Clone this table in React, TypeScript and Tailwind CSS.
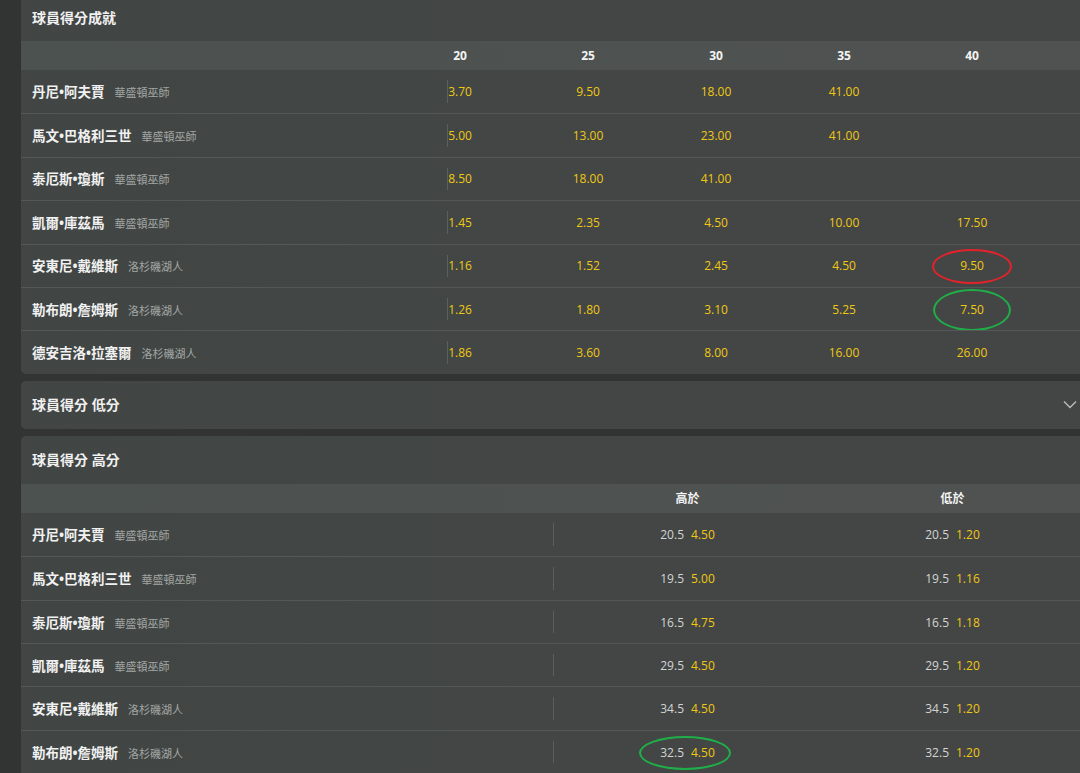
import React from "react";

const font = { fontFamily: '"Open Sans","Noto Sans CJK TC",sans-serif' };

type Mark = { color: "red" | "green"; w: number; h: number; dx?: number };

const p1: { name: string; team: string; v: string[]; marks?: Record<number, Mark> }[] = [
  { name: "丹尼•阿夫賈", team: "華盛頓巫師", v: ["3.70", "9.50", "18.00", "41.00", ""] },
  { name: "馬文•巴格利三世", team: "華盛頓巫師", v: ["5.00", "13.00", "23.00", "41.00", ""] },
  { name: "泰厄斯•瓊斯", team: "華盛頓巫師", v: ["8.50", "18.00", "41.00", "", ""] },
  { name: "凱爾•庫茲馬", team: "華盛頓巫師", v: ["1.45", "2.35", "4.50", "10.00", "17.50"] },
  { name: "安東尼•戴維斯", team: "洛杉磯湖人", v: ["1.16", "1.52", "2.45", "4.50", "9.50"], marks: { 4: { color: "red", w: 80, h: 35 } } },
  { name: "勒布朗•詹姆斯", team: "洛杉磯湖人", v: ["1.26", "1.80", "3.10", "5.25", "7.50"], marks: { 4: { color: "green", w: 78, h: 42 } } },
  { name: "德安吉洛•拉塞爾", team: "洛杉磯湖人", v: ["1.86", "3.60", "8.00", "16.00", "26.00"] },
];

const p3: { name: string; team: string; o: [string, string]; u: [string, string]; mark?: Mark }[] = [
  { name: "丹尼•阿夫賈", team: "華盛頓巫師", o: ["20.5", "4.50"], u: ["20.5", "1.20"] },
  { name: "馬文•巴格利三世", team: "華盛頓巫師", o: ["19.5", "5.00"], u: ["19.5", "1.16"] },
  { name: "泰厄斯•瓊斯", team: "華盛頓巫師", o: ["16.5", "4.75"], u: ["16.5", "1.18"] },
  { name: "凱爾•庫茲馬", team: "華盛頓巫師", o: ["29.5", "4.50"], u: ["29.5", "1.20"] },
  { name: "安東尼•戴維斯", team: "洛杉磯湖人", o: ["34.5", "4.50"], u: ["34.5", "1.20"] },
  { name: "勒布朗•詹姆斯", team: "洛杉磯湖人", o: ["32.5", "4.50"], u: ["32.5", "1.20"], mark: { color: "green", w: 92, h: 34, dx: -3 } },
];

function Ellipse({ m }: { m: Mark }) {
  return (
    <div
      className={
        "pointer-events-none absolute left-1/2 top-1/2 rounded-[50%] border-[2.5px] " +
        (m.color === "red" ? "border-[#e3232b]" : "border-[#1fae48]")
      }
      style={{ width: m.w, height: m.h, marginLeft: -m.w / 2 + (m.dx ?? 0), marginTop: -m.h / 2 }}
    />
  );
}

function Name({ name, team }: { name: string; team: string }) {
  return (
    <div className="flex items-baseline pl-[11px]">
      <span className="text-[13.5px] font-bold text-[#f1f1f1]">{name}</span>
      <span className="ml-[10px] text-[11px] text-[#a3a7a5]">{team}</span>
    </div>
  );
}

function Title({ children, chevron }: { children: React.ReactNode; chevron?: boolean }) {
  return (
    <div className="flex h-[48px] items-center justify-between pl-[11px] pr-[10px]">
      <span className="text-[14px] font-bold text-[#f1f1f1]">{children}</span>
      {chevron && (
        <svg width="14" height="9" viewBox="0 0 14 9" className="mr-[1px]">
          <path d="M1 1.5 L7 7.5 L13 1.5" fill="none" stroke="#b8bcba" strokeWidth="1.4" />
        </svg>
      )}
    </div>
  );
}

export default function App() {
  return (
    <div className="h-[773px] w-[1080px] overflow-hidden bg-[#323433]" style={font}>
      <div className="ml-[21px] mt-[-7px] flex w-[1067px] flex-col">
        {/* Panel 1 */}
        <div className="overflow-hidden rounded-[5px] bg-gradient-to-r from-[#414644] to-[#444645]">
          <Title>球員得分成就</Title>
          <div className="flex h-[29px] items-center bg-gradient-to-r from-[#4c5250] to-[#4f5250] pt-px">
            <div className="w-[375px]" />
            {["20", "25", "30", "35", "40"].map((h) => (
              <div key={h} className="w-[128px] text-center text-[12px] font-bold text-[#f4f4f4]">
                {h}
              </div>
            ))}
          </div>
          {p1.map((r, i) => (
            <div
              key={r.name}
              className={"relative flex h-[43.4px] items-center pt-px " + (i > 0 ? "border-t border-[#535755]" : "")}
            >
              <div className="w-[375px]">
                <Name name={r.name} team={r.team} />
              </div>
              <div className="absolute left-[426px] top-[10px] bottom-[10px] w-px bg-[#5b5f5d]" />
              {r.v.map((v, j) => (
                <div key={j} className="relative flex h-full w-[128px] items-center justify-center text-[12px] text-[#f0c814]">
                  {v}
                  {r.marks && r.marks[j] && <Ellipse m={r.marks[j]} />}
                </div>
              ))}
            </div>
          ))}
        </div>

        {/* Panel 2 */}
        <div className="mt-[7px] rounded-[5px] bg-gradient-to-r from-[#414644] to-[#444645]">
          <Title chevron>球員得分 低分</Title>
        </div>

        {/* Panel 3 */}
        <div className="mt-[7px] rounded-t-[5px] bg-gradient-to-r from-[#414644] to-[#444645]">
          <Title>球員得分 高分</Title>
          <div className="flex h-[29px] items-center bg-gradient-to-r from-[#4c5250] to-[#4f5250] pt-[2px]">
            <div className="w-[534px]" />
            {["高於", "低於"].map((h) => (
              <div key={h} className="w-[265px] text-center text-[12px] font-bold text-[#f4f4f4]">
                {h}
              </div>
            ))}
          </div>
          {p3.map((r, i) => (
            <div
              key={r.name}
              className={"relative flex h-[43.4px] items-center pt-[2px] " + (i > 0 ? "border-t border-[#535755]" : "")}
            >
              <div className="w-[534px]">
                <Name name={r.name} team={r.team} />
              </div>
              <div className="absolute left-[532px] top-[10px] bottom-[10px] w-px bg-[#5b5f5d]" />
              {[r.o, r.u].map((c, j) => (
                <div key={j} className="relative flex h-full w-[265px] items-center justify-center gap-[7px] text-[12px]">
                  <span className="text-[#d2d5d4]">{c[0]}</span>
                  <span className="text-[#f0c814]">{c[1]}</span>
                  {j === 0 && r.mark && <Ellipse m={r.mark} />}
                </div>
              ))}
            </div>
          ))}
        </div>
      </div>
    </div>
  );
}
